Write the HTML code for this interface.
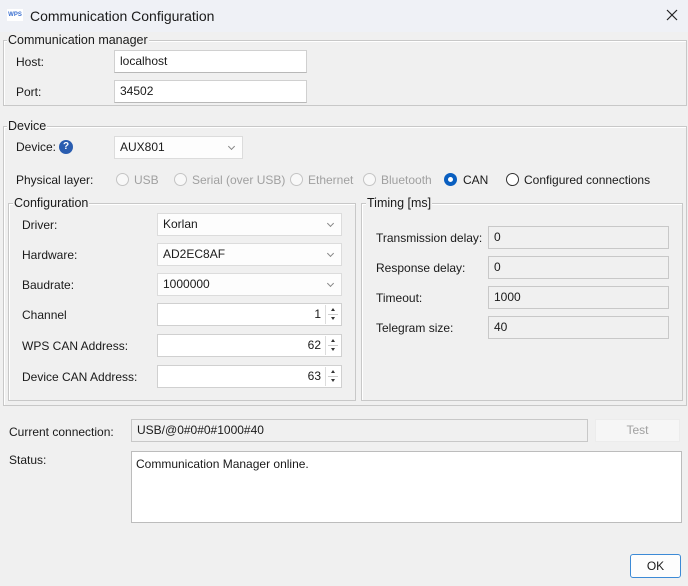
<!DOCTYPE html>
<html><head><meta charset="utf-8"><style>
*{box-sizing:border-box;margin:0;padding:0}
body{width:688px;height:586px;background:#f0f0f0;font-family:"Liberation Sans",sans-serif;font-size:12px;color:#1a1a1a;position:relative;overflow:hidden}
.a{position:absolute}
.t{position:absolute;line-height:14px;white-space:nowrap}
.g{position:absolute;border:1px solid #c8c8c8;box-shadow:inset 1px 1px 0 #fff}
.gl{position:absolute;background:#f0f0f0;padding:0 1px;line-height:14px;font-size:12.5px}
.in{position:absolute;background:#fff;border:1px solid #d0d0d0;border-bottom-color:#b8b8b8;padding-left:5px;line-height:21px}
.ro{position:absolute;background:#f0f0f0;border:1px solid #c8c8c8;padding-left:5px;line-height:21px}
.cb{position:absolute;background:#fdfdfd;border:1px solid #dcdcdc;padding-left:5px;line-height:21px}
.cb:after{content:"";position:absolute;right:8px;top:7px;width:4px;height:4px;border-right:1px solid #888;border-bottom:1px solid #888;transform:rotate(45deg)}
.sp{position:absolute;background:#fff;border:1px solid #d0d0d0;text-align:right;padding-right:20px;line-height:21px}
.sp i{position:absolute;right:1px;top:1px;width:15px;height:19px;border-left:1px solid #ddd}
.sp i:before{content:"";position:absolute;left:5px;top:3px;border:2.5px solid transparent;border-bottom:3px solid #333;border-top:0}
.sp i:after{content:"";position:absolute;left:5px;top:12px;border:2.5px solid transparent;border-top:3px solid #333;border-bottom:0}
.sp i b{position:absolute;left:2px;right:2px;top:9px;border-top:1px solid #ccc}
.r{position:absolute;width:13px;height:13px;border:1px solid #c4c4c4;border-radius:50%;background:#f8f8f8}
.dis{color:#a0a0a0}
</style></head><body>
<div class="a" style="left:0;top:0;width:688px;height:32px;background:#eff1f6"></div>
<div class="t" style="left:7px;top:9px;width:16px;height:12px;background:#fff;font-size:6px;font-weight:bold;color:#3a6fd0;line-height:12px;text-align:center">WPS</div>
<div class="t" style="left:30px;top:8px;font-size:14px;line-height:16px">Communication Configuration</div>
<svg class="a" style="left:666px;top:9px" width="12" height="12"><path d="M1 1L11 11M11 1L1 11" stroke="#222" stroke-width="1.2"/></svg>

<div class="g" style="left:3px;top:40px;width:684px;height:66px"></div>
<div class="gl" style="left:7px;top:33px">Communication manager</div>
<div class="t" style="left:16px;top:55px">Host:</div>
<div class="in" style="left:114px;top:50px;width:193px;height:23px">localhost</div>
<div class="t" style="left:16px;top:85px">Port:</div>
<div class="in" style="left:114px;top:80px;width:193px;height:23px">34502</div>

<div class="g" style="left:3px;top:126px;width:684px;height:280px"></div>
<div class="gl" style="left:7px;top:119px">Device</div>
<div class="t" style="left:16px;top:140px">Device:</div>
<div class="a" style="left:59px;top:140px;width:14px;height:14px;border-radius:50%;background:#2a5db0;color:#fff;font-weight:bold;font-size:10px;text-align:center;line-height:14px">?</div>
<div class="cb" style="left:114px;top:136px;width:129px;height:23px">AUX801</div>
<div class="t" style="left:16px;top:173px">Physical layer:</div>
<div class="r" style="left:116px;top:173px"></div><div class="t dis" style="left:134px;top:173px">USB</div>
<div class="r" style="left:174px;top:173px"></div><div class="t dis" style="left:192px;top:173px">Serial (over USB)</div>
<div class="r" style="left:290px;top:173px"></div><div class="t dis" style="left:308px;top:173px">Ethernet</div>
<div class="r" style="left:363px;top:173px"></div><div class="t dis" style="left:381px;top:173px">Bluetooth</div>
<div class="r" style="left:444px;top:173px;background:#fff;border:4px solid #0a5fc0"></div><div class="t" style="left:463px;top:173px">CAN</div>
<div class="r" style="left:506px;top:173px;border-color:#333;background:#fff"></div><div class="t" style="left:524px;top:173px">Configured connections</div>

<div class="g" style="left:8px;top:203px;width:348px;height:198px"></div>
<div class="gl" style="left:13px;top:196px">Configuration</div>
<div class="t" style="left:22px;top:218px">Driver:</div>
<div class="cb" style="left:157px;top:213px;width:185px;height:23px">Korlan</div>
<div class="t" style="left:22px;top:248px">Hardware:</div>
<div class="cb" style="left:157px;top:243px;width:185px;height:23px">AD2EC8AF</div>
<div class="t" style="left:22px;top:278px">Baudrate:</div>
<div class="cb" style="left:157px;top:273px;width:185px;height:23px">1000000</div>
<div class="t" style="left:22px;top:308px">Channel</div>
<div class="sp" style="left:157px;top:303px;width:185px;height:23px">1<i><b></b></i></div>
<div class="t" style="left:22px;top:339px">WPS CAN Address:</div>
<div class="sp" style="left:157px;top:334px;width:185px;height:23px">62<i><b></b></i></div>
<div class="t" style="left:22px;top:370px">Device CAN Address:</div>
<div class="sp" style="left:157px;top:365px;width:185px;height:23px">63<i><b></b></i></div>

<div class="g" style="left:361px;top:203px;width:322px;height:198px"></div>
<div class="gl" style="left:366px;top:196px">Timing [ms]</div>
<div class="t" style="left:376px;top:231px">Transmission delay:</div>
<div class="ro" style="left:488px;top:226px;width:181px;height:23px">0</div>
<div class="t" style="left:376px;top:261px">Response delay:</div>
<div class="ro" style="left:488px;top:256px;width:181px;height:23px">0</div>
<div class="t" style="left:376px;top:291px">Timeout:</div>
<div class="ro" style="left:488px;top:286px;width:181px;height:23px">1000</div>
<div class="t" style="left:376px;top:321px">Telegram size:</div>
<div class="ro" style="left:488px;top:316px;width:181px;height:23px">40</div>

<div class="t" style="left:9px;top:425px">Current connection:</div>
<div class="ro" style="left:131px;top:419px;width:457px;height:23px">USB/@0#0#0#1000#40</div>
<div class="a dis" style="left:595px;top:419px;width:85px;height:23px;background:#f6f6f6;border:1px solid #ececec;text-align:center;line-height:21px">Test</div>
<div class="t" style="left:9px;top:453px">Status:</div>
<div class="a" style="left:131px;top:451px;width:551px;height:72px;background:#fff;border:1px solid #bcbcbc;padding:5px 4px;line-height:14px">Communication Manager online.</div>
<div class="a" style="left:630px;top:554px;width:51px;height:24px;background:#fdfdfd;border:1px solid #3c8ad6;border-radius:3px;text-align:center;line-height:22px">OK</div>
</body></html>
